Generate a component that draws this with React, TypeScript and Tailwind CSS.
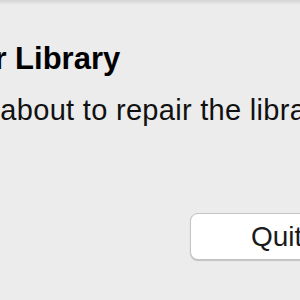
export default function App() {
  return (
    <div className="relative h-[300px] w-[300px] overflow-hidden bg-[#ececec] font-['Liberation_Sans',Arial,sans-serif] text-black">
      <div className="h-[5px] bg-gradient-to-b from-[#d4d4d4] to-[#ececec]" />
      <div className="ml-[-90px] w-[700px]">
        <h1 className="mt-[38px] whitespace-nowrap text-[31px] font-bold leading-none">Repair Library</h1>
        <p className="ml-[-19px] mt-[22px] whitespace-nowrap text-[29px] leading-none tracking-[0.3px] text-[#111]">
          You are about to repair the library. This may take a while.
        </p>
        <div className="mt-[88px] flex">
          <button className="ml-[280px] h-[47px] rounded-[8px] border-[1.5px] border-[#c3c3c3] bg-white px-[60px] text-[28px] leading-none text-[#1a1a1a] shadow-[0_1px_1px_rgba(0,0,0,0.18)]">
            Quit
          </button>
        </div>
      </div>
    </div>
  );
}
